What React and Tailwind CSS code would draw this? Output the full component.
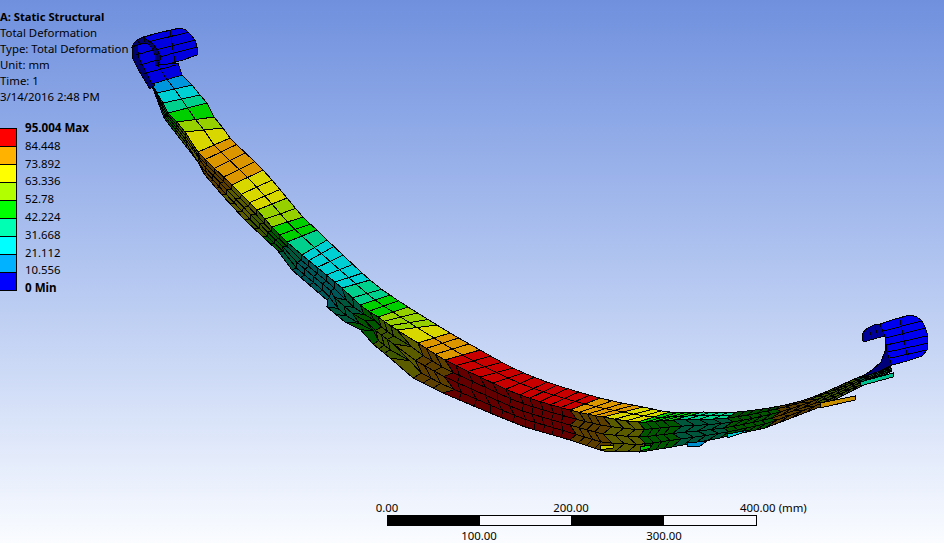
const C = {
  lb: [0, 150, 222], cy: [0, 208, 212], te: [0, 208, 140], gr: [0, 208, 0], yg: [150, 208, 0],
  ye: [216, 216, 0], or: [220, 150, 0], re: [200, 0, 0], bl: [0, 0, 225],
};
// upper edge and inner edge of the top face, colour of the span that follows
const S = [
  [182,75,152,84,'lb'],[192,85,157,93,'cy'],[200,95,163,103,'te'],[207,103,168,113,'gr'],
  [214,117,177,122,'yg'],[223,128,185,132,'ye'],[230,138,198,152,'or'],[263,170,232,185,'ye'],
  [287,198,257,210,'yg'],[303,217,272,227,'gr'],[317,230,287,242,'te'],[327,240,302,255,'cy'],
  [370,280,342,288,'te'],[390,295,360,305,'gr'],[408,307,378,317,'yg'],[437,325,397,330,'ye'],
  [450,333,418,343,'or'],[480,350,445,360,'re'],[513,368,480,377,'re'],[547,382,520,395,'re'],
  [600,398,570,410,'or'],[643,407,603,417,'ye'],[670,412,638,422,'gr'],[703,412,673,420,'te'],
  [737,412,727,418,'gr'],[780,406,776,409,'or'],[813,397,811,399,'yg'],[857,378,855,381,'te'],[892,365,890,366,'bl'],
];
// lower edge of the side: [station, x, y]; the repeated x are the leaf ends
const B = [
  [0,152,86],[3,164,118],[6,198,162],[6.01,199,168],[7,222,195],[8,245,220],[9,263,237],[10.9,291,263],[11,292,270],
  [11.8,327,300],[12,327,307],[13,345,322],[13.9,373,336],[14,373,344],[15,390,358],[15.9,413,370],[16,413,378],
  [17,443,393],[18,490,413],[19,525,427],[20,570,440],[21,603,451],[22,640,452],[23,672,447],[24,720,438],[25,765,428],[26,820,407],[27,860,387],[28,892,371],
];
const lerp = (a, b, t) => a + (b - a) * t;
const rgb = (c, k = 1) => `rgb(${Math.round(c[0] * k)},${Math.round(c[1] * k)},${Math.round(c[2] * k)})`;
const pts = a => a.map(p => p.map(v => v.toFixed(1)).join(',')).join(' ');
const cr = (a, b, c, d, t) => 0.5 * (2 * b + (c - a) * t + (2 * a - 5 * b + 4 * c - d) * t * t + (3 * b - a - 3 * c + d) * t * t * t);
const edge = (s, ix) => {
  const i = Math.min(S.length - 2, Math.floor(s)), t = s - i;
  const g = k => S[Math.max(0, Math.min(S.length - 1, k))][ix];
  return cr(g(i - 1), g(i), g(i + 1), g(i + 2), t);
};
const lowEdge = s => {
  let i = 0;
  while (i < B.length - 2 && B[i + 1][0] <= s) i++;
  const t = Math.min(1, (s - B[i][0]) / (B[i + 1][0] - B[i][0]));
  return [lerp(B[i][1], B[i + 1][1], t), lerp(B[i][2], B[i + 1][2], t)];
};
const U = s => [edge(s, 0), edge(s, 1)];
const L = s => [edge(s, 2), edge(s, 3)];

function buildCells() {
  const side = [], top = [], stops = [];
  for (let i = 0; i < S.length - 1; i++) {
    const len = Math.hypot(S[i + 1][0] - S[i][0], S[i + 1][1] - S[i][1]);
    const n = Math.max(1, Math.round(len / (i > 20 ? 8 : 12)));
    for (let j = 0; j < n; j++) stops.push(i + j / n);
  }
  stops.push(S.length - 1);
  const sAt = k => {
    const c = Math.max(0, Math.min(stops.length - 1, k));
    const f = Math.floor(c), t = c - f;
    return f >= stops.length - 1 ? stops[stops.length - 1] : lerp(stops[f], stops[f + 1], t);
  };
  const rows = 4;
  const P = (k, r) => {
    const s0 = sAt(k);
    const shift = s0 >= 12 && !(s0 >= 17.1 && s0 < 19.9) ? 0.75 : s0 >= 6 ? 0.25 : 0;
    const s = sAt(k + (r % 2 ? shift : 0));
    const a = L(s), b = lowEdge(s), v = r / rows;
    return [lerp(a[0], b[0], v), lerp(a[1], b[1], v)];
  };
  for (let k = 0; k < stops.length - 1; k++) {
    const s0 = stops[k], s1 = stops[k + 1], col = C[S[Math.floor(s0)][4]];
    const U0 = U(s0), U1 = U(s1), L0 = L(s0), L1 = L(s1);
    const M0 = [(U0[0] + L0[0]) / 2, (U0[1] + L0[1]) / 2], M1 = [(U1[0] + L1[0]) / 2, (U1[1] + L1[1]) / 2];
    if (s0 < 24) {
      top.push({ p: [L0, L1, M1, M0], f: rgb(col) });
      top.push({ p: [M0, M1, U1, U0], f: rgb(col) });
    } else {
      top.push({ p: [L0, L1, U1, U0], f: rgb(col, 0.38) });
    }
    for (let r = 0; r < rows; r++) {
      side.push({
        p: [P(k, r), P(k + 1, r), P(k + 1, r + 1), P(k, r + 1)],
        f: rgb(col, S[Math.floor(s0)][4] === 're' ? 0.5 : 0.42),
      });
    }
  }
  return { side, top };
}
const { side, top } = buildCells();

const leafEnds = [
  [[600,446],[613,445],[613,448],[600,450],'#c8c800'],
  [[640,447],[650,445],[650,448],[640,451],'#00c800'],
  [[687,443],[707,441],[700,446],[687,447],'#0090d0'],
  [[727,434],[750,430],[742,433],[727,438],'#00c8d0'],
  [[820,403],[855,396],[855,400],[820,408],'#c89000'],
  [[860,382],[893,373],[893,377],[860,386],'#00c090'],
];

function Spring() {
  return (
    <svg className="absolute inset-0 pointer-events-none" width="944" height="543" viewBox="0 0 944 543" shapeRendering="crispEdges">
      {side.map((c, i) => <polygon key={'s' + i} points={pts(c.p)} fill={c.f} stroke="#000" strokeWidth="1" />)}
      {leafEnds.map((l, i) => <polygon key={'l' + i} points={pts(l.slice(0, 4))} fill={l[4]} stroke="#000" strokeWidth="1" />)}
      {top.map((c, i) => <polygon key={'t' + i} points={pts(c.p)} fill={c.f} stroke="#000" strokeWidth="1" />)}

      {/* left eye */}
      <g stroke="#000" strokeWidth="1">
        <polygon points="132,47 132,53 133,59 137,67 142,76 150,89 155,85 146,72 139,58 137,45" fill="#00006e" />
        <polygon points="137,45 143,43 148,44 152,48 155,55 155,65 168,64 178,63 182,75 152,84 146,72 139,58" fill="#0000e0" />
        <path d="M136,55 L153,50 M139,65 L158,60 M143,74 L176,65 M158,65 L167,80" fill="none" />
        <polygon points="132,47 134,43 137,40 143,37 149,40 153,44 157,49 160,55 160,60 158,65 155,65 155,55 152,48 148,44 143,43 137,45" fill="#00006e" />
        <path d="M137,40 L141,45 M143,37 L146,44 M149,40 L150,46 M155,47 L152,50 M159,53 L155,56 M160,60 L155,60" fill="none" />
        <polygon points="143,37 162,32 180,28 186,30 191,35 195,40 197,47 197,55 183,60 168,64 158,65 160,60 160,55 157,49 153,44" fill="#0000e0" />
        <path d="M148,42 L189,32 M155,50 L195,40 M159,57 L197,47 M170,31 L175,62" fill="none" />
      </g>

      {/* right eye */}
      <g stroke="#000" strokeWidth="1">
        <polygon points="885,337 887,351 892,365 880,371 860,378 872,370 881,362 885,351" fill="#00007a" />
        <polygon points="863,341 862,336 863,333 865,330 868,328 874,325 880,324 883,329 885,336 877,338 867,341" fill="#00009a" />
        <path d="M869,328 L872,339 M875,326 L878,337" fill="none" />
        <polygon points="880,324 895,319 910,315 917,317 922,321 925,327 927,333 928,342 927,350 922,356 907,361 892,365 889,358 887,351 885,337" fill="#0000f0" />
        <path d="M883,331 L922,321 M885,338 L925,328 M886,345 L927,336 M888,352 L928,343 M890,358 L927,350 M900,320 L908,360" fill="none" />
      </g>
    </svg>
  );
}

const LEGEND = [
  ['bg-[#ff0000]', '84.448'], ['bg-[#ffb200]', '73.892'], ['bg-[#ffff00]', '63.336'],
  ['bg-[#b2ff00]', '52.78'], ['bg-[#00ff00]', '42.224'], ['bg-[#00ffb2]', '31.668'],
  ['bg-[#00ffff]', '21.112'], ['bg-[#00b2ff]', '10.556'], ['bg-[#0000ff]', null],
];

export default function App() {
  return (
    <div className="relative flex flex-col w-[944px] h-[543px] overflow-hidden bg-gradient-to-b from-[#7090de] to-[#fafcff] font-['Noto_Sans','Open_Sans',sans-serif] text-[11.4px] leading-[16px] text-[#000]">
      <Spring />

      <div className="relative flex flex-col pt-[9px]">
        <div className="font-bold text-[11.2px]">A: Static Structural</div>
        <div>Total Deformation</div>
        <div>Type: Total Deformation</div>
        <div>Unit: mm</div>
        <div>Time: 1</div>
        <div>3/14/2016 2:48 PM</div>
      </div>

      <div className="relative flex mt-[23px]">
        <div className="flex flex-col w-[17px] h-[163px] border border-l-0 border-black">
          {LEGEND.map(([cls], i) => (
            <div key={i} className={`flex-1 ${cls} ${i ? 'border-t border-black' : ''}`} />
          ))}
        </div>
        <div className="flex flex-col ml-[8px] mt-[-9px]">
          <div className="h-[17.8px] leading-[18px] font-bold text-[11.6px]">95.004 Max</div>
          {LEGEND.slice(0, 8).map(([, v]) => (
            <div key={v} className="h-[17.8px] leading-[18px]">{v}</div>
          ))}
          <div className="h-[17.8px] leading-[18px] font-bold text-[11.6px]">0 Min</div>
        </div>
      </div>

      <div className="relative mt-auto ml-[367px] w-[460px]">
        <div className="flex h-[15px] leading-[15px]">
          <span className="w-[40px] text-center">0.00</span>
          <span className="w-[40px] ml-[144px] text-center">200.00</span>
          <span className="ml-[149px] flex gap-[3px] whitespace-nowrap"><span>400.00</span><span>(mm)</span></span>
        </div>
        <div className="flex w-[370px] h-[11px] ml-[20px] border border-black">
          <div className="w-[92px] bg-black" />
          <div className="w-[91px] bg-[#f8f9ff]" />
          <div className="w-[93px] bg-black" />
          <div className="flex-1 bg-[#f8f9ff]" />
        </div>
        <div className="flex h-[17px] leading-[20px] ml-[92px]">
          <span className="w-[40px] text-center">100.00</span>
          <span className="w-[40px] ml-[145px] text-center">300.00</span>
        </div>
      </div>
    </div>
  );
}
